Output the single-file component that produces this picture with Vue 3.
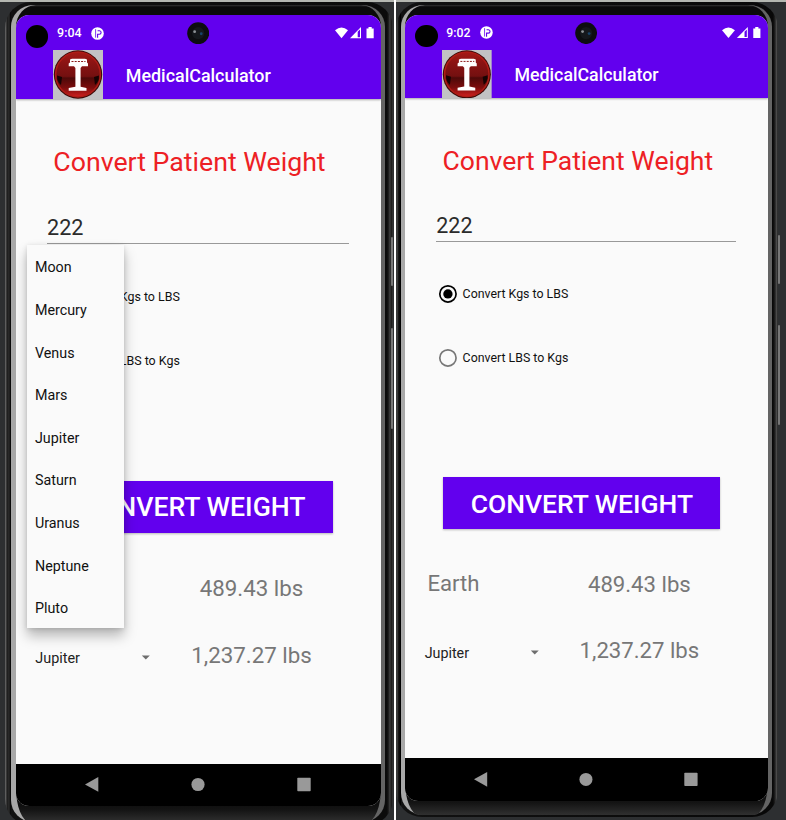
<script setup>
import { ref } from 'vue'

const planets = ['Moon', 'Mercury', 'Venus', 'Mars', 'Jupiter', 'Saturn', 'Uranus', 'Neptune', 'Pluto']
const phones = ref([
  { id: 'first', time: '9:04', menuOpen: true },
  { id: 'second', time: '9:02', menuOpen: false }
])
const modes = [
  { label: 'Convert Kgs to LBS', selected: true },
  { label: 'Convert LBS to Kgs', selected: false }
]
</script>

<template>
  <main class="board">
    <section v-for="phone in phones" :key="phone.id" class="pane" :class="phone.id">
      <div class="frame">
        <i class="key power"></i>
        <i class="key volume"></i>
        <div class="rim">
          <div class="glass">
            <div class="screen">
              <header class="top">
                <i class="dot"></i>
                <svg class="camera" viewBox="0 0 22 22">
                  <circle cx="11" cy="11" r="10.8" fill="#0d0d10" />
                  <circle cx="11" cy="11" r="6" fill="#15181c" />
                  <circle cx="7.5" cy="9.5" r="1.4" fill="#8d9296" />
                  <circle cx="14" cy="11.5" r="1.4" fill="#17446b" />
                </svg>
                <div class="status">
                  <span class="time">{{ phone.time }}</span>
                  <svg class="badge" viewBox="0 0 13 13">
                    <circle cx="6.5" cy="6.5" r="6.3" fill="#fff" />
                    <path d="M4.6 2.2V10.6" fill="none" stroke="#6200ee" stroke-width=".8" />
                    <path d="M6.6 10.8V7.2H8.4a1.6 1.6 0 0 0 0-3.4H6.6" fill="none" stroke="#6200ee" stroke-width="1.1" />
                  </svg>
                  <svg class="signals" viewBox="0 0 40 12">
                    <path d="M0 3.2Q6.5-2 13 3.2L6.5 11.2Z" fill="#fff" />
                    <path d="M15 11.2L26 0V11.2Z" fill="#fff" />
                    <path d="M22.7 4.8L25 2.5V10.2H22.7Z" fill="#6200ee" />
                    <path d="M31.5 1.5H33.5V0H36.7V1.5H38.7V11.2H31.5Z" fill="#fff" />
                  </svg>
                </div>
                <div class="appbar">
                  <svg class="logo" viewBox="0 0 50 49" preserveAspectRatio="none">
                    <defs>
                      <linearGradient :id="'ball-' + phone.id" x1="0" y1="0" x2="0" y2="1">
                        <stop offset="0" stop-color="#a51a16" />
                        <stop offset=".25" stop-color="#8a1313" />
                        <stop offset=".54" stop-color="#741010" />
                        <stop offset=".58" stop-color="#4e0909" />
                        <stop offset=".8" stop-color="#7d0d0d" />
                        <stop offset="1" stop-color="#d02020" />
                      </linearGradient>
                    </defs>
                    <rect width="50" height="49" fill="#c2c2c4" />
                    <circle cx="25" cy="24.5" r="24.2" fill="#3c0a08" />
                    <circle cx="25" cy="24.5" r="22.4" :fill="`url(#ball-${phone.id})`" stroke="#b01c17" stroke-width="1.5" />
                    <path d="M4 25.5Q4 32 8 35L9 27ZM46 25.5Q46 32 42 35L41 27Z" fill="#160303" />
                    <path d="M17 9.5L19 8.7H32L34 9.5V12.5L35 13.5V16.3H29L27.6 18V36.8L33.5 38V40.8H15.7V38L22.4 36.8V18L21 16.3H15.7V13.5L17 12.5Z" fill="#fff" />
                    <path d="M18.5 11.5H32.5" stroke="#8b1717" stroke-width="1" stroke-dasharray="2 1.2" />
                  </svg>
                  <h1>MedicalCalculator</h1>
                </div>
              </header>

              <div class="content">
                <h2>Convert Patient Weight</h2>
                <div class="field">222</div>
                <div v-for="mode in modes" :key="mode.label" class="radio">
                  <svg viewBox="0 0 20 20" :class="{ on: mode.selected }">
                    <circle cx="10" cy="10" r="8.2" fill="none" stroke="currentColor" stroke-width="1.7" />
                    <circle v-if="mode.selected" cx="10" cy="10" r="4.7" fill="currentColor" />
                  </svg>
                  <span>{{ mode.label }}</span>
                </div>
                <button type="button">CONVERT WEIGHT</button>
                <div class="result earth">
                  <span class="place">Earth</span>
                  <span class="amount">489.43 lbs</span>
                </div>
                <div class="result other">
                  <span class="choice">Jupiter</span>
                  <svg class="caret" viewBox="0 0 10 5"><path d="M.8.5H8.8L4.8 4.5Z" fill="#6d6d6d" /></svg>
                  <span class="amount">1,237.27 lbs</span>
                </div>
              </div>

              <nav>
                <svg viewBox="0 0 14 15"><path d="M13.3 0V14.8L0 7.4Z" fill="#999" /></svg>
                <svg viewBox="0 0 14 15"><circle cx="7" cy="7.5" r="6.6" fill="#999" /></svg>
                <svg viewBox="0 0 14 15"><rect x=".3" y=".8" width="13.4" height="13.4" rx=".8" fill="#999" /></svg>
              </nav>

              <ul v-if="phone.menuOpen" class="menu">
                <li v-for="planet in planets" :key="planet">{{ planet }}</li>
              </ul>
            </div>
          </div>
        </div>
      </div>
    </section>
  </main>
</template>

<style>
body { margin: 0; background: #fff; overflow: hidden; }
</style>

<style scoped>
* { box-sizing: border-box; }
.board { display: flex; gap: 2px; width: 786px; height: 820px; font-family: Roboto, sans-serif; background: #fff; }
.pane { --u: 1px; height: 820px; overflow: hidden; background: #2d2f31; border-top: 2px solid #b4b7b1; }
.first { width: 394px; padding-left: 5px; }
.second { --u: .9933px; width: 390px; }
.frame {
  position: relative; width: 387.5px; height: 823px; padding: 3px 8px 3px 6px; border-radius: 26px;
  background:
    linear-gradient(90deg, #666 0, #555 1px, #1c1c1c 2px, #2c2c2c 4px, #000 6px, transparent 6px),
    linear-gradient(270deg, #3a3a3a 0, #151515 2px, #484848 3px, #252525 4px, #0b0b0b 6px, #111 100%);
}
.second .frame {
  width: 382px; height: 815px; padding: 3px 6.5px 2px 4.5px;
  background:
    linear-gradient(90deg, #1c1c1c 0, #555 1px, #1c1c1c 2px, #000 4.5px, transparent 5px),
    linear-gradient(270deg, #222 0, #4a4a4a 1.5px, #222 3px, #080808 5px, #111 100%);
}
.rim {
  height: 100%; padding: 0 3.5px 0 4.5px; border-radius: 22px;
  background: linear-gradient(90deg, #a8a8a8 0 50%, #646464 50%);
}
.glass {
  height: 100%; padding-top: 10px; border-radius: 20px 20px 14px 14px / 22px 22px 34px 34px;
  background: linear-gradient(#333 0, #0a0a0a 2px, #0c0c0c 97.5%, #141414 98.5%, #303030 100%);
}
.key { position: absolute; right: 0; width: 2px; border-radius: 1px; background: #777; }
.power { top: 235px; height: 49px; }
.volume { top: 326px; height: 101px; }
.second .power { top: 233px; height: 49px; right: -2px; }
.second .volume { top: 323px; height: 100px; right: -2px; }
.screen {
  position: relative; display: flex; flex-direction: column; width: 100%; height: calc(791 * var(--u));
  overflow: hidden; border-radius: 13px; background: #fafafa;
}
.top {
  position: relative; flex: none; height: calc(84 * var(--u)); background: #6200ee; color: #fff;
  box-shadow: 0 1px 2px #0005;
}
.dot, .camera { position: absolute; width: calc(22.4 * var(--u)); height: calc(22.4 * var(--u)); }
.dot { left: calc(10.5 * var(--u)); top: calc(10.3 * var(--u)); border-radius: 50%; background: #000; }
.camera { left: calc(171.3 * var(--u)); top: calc(7 * var(--u)); }
.status {
  display: flex; align-items: center; height: calc(35 * var(--u)); padding: 1px calc(6.2 * var(--u)) 0 calc(41.6 * var(--u));
}
.time { width: calc(34.3 * var(--u)); font-size: calc(12.4 * var(--u)); font-weight: 500; line-height: 1; }
.badge { width: calc(13 * var(--u)); height: calc(13 * var(--u)); }
.signals { width: calc(40 * var(--u)); height: calc(12 * var(--u)); margin-left: auto; }
.appbar { display: flex; height: calc(49 * var(--u)); padding-left: calc(37.5 * var(--u)); }
.logo { width: calc(50 * var(--u)); height: 100%; }
h1 {
  margin: 0 0 0 calc(22.8 * var(--u)); font-size: calc(17.9 * var(--u)); font-weight: 500;
  line-height: calc(51 * var(--u));
}
.content { display: flex; flex: 1; flex-direction: column; align-items: flex-start; min-height: 0; }
h2 {
  margin: calc(46.4 * var(--u)) 0 0 calc(37.8 * var(--u)); font-size: calc(26.7 * var(--u)); font-weight: 400;
  line-height: calc(34 * var(--u)); color: #ed2024; white-space: nowrap;
}
.second h2 { margin-top: 45.4px; margin-bottom: .7px; }
.field {
  width: calc(302 * var(--u)); height: calc(34 * var(--u)); margin: calc(30.6 * var(--u)) 0 0 calc(31 * var(--u));
  padding-left: .5px; border-bottom: 1px solid #999; font-size: calc(21.6 * var(--u)); line-height: calc(35 * var(--u)); color: #2b2b2b;
}
.first .field { margin-bottom: .8px; }
.second .field { margin-bottom: .3px; }
.radio {
  display: flex; align-items: center; gap: calc(4.3 * var(--u)); height: calc(24 * var(--u));
  margin: calc(40 * var(--u)) 0 0 calc(33.7 * var(--u)); font-size: calc(12.45 * var(--u)); color: #111;
}
.radio svg { width: calc(20 * var(--u)); height: calc(20 * var(--u)); color: #777; }
.radio svg.on { color: #000; }
button {
  width: calc(279 * var(--u)); height: calc(51.5 * var(--u)); margin: calc(108.3 * var(--u)) 0 0 calc(38.6 * var(--u));
  padding: 2px 0 0; border: 0; background: #6200ee; color: #fff; font-family: inherit; font-size: calc(26.65 * var(--u));
  font-weight: 500; line-height: calc(49.5 * var(--u)); white-space: nowrap; box-shadow: 0 1px 2px #0004;
}
.result {
  display: flex; align-items: center; width: 100%; height: calc(30 * var(--u));
  font-size: calc(22.3 * var(--u)); color: #777; white-space: nowrap;
}
.earth { margin-top: calc(40.5 * var(--u)); padding-left: calc(22.6 * var(--u)); }
.place { width: calc(161.6 * var(--u)); padding-bottom: 1px; }
.other { margin-top: calc(37 * var(--u)); padding-left: calc(19.8 * var(--u)); }
.choice { width: calc(106 * var(--u)); padding-top: calc(6 * var(--u)); font-size: calc(14.4 * var(--u)); color: #222; }
.caret { width: calc(10 * var(--u)); height: calc(5 * var(--u)); margin: calc(5 * var(--u)) calc(40 * var(--u)) 0 0; }
nav {
  display: flex; flex: none; justify-content: space-between; align-items: center; height: calc(42.5 * var(--u));
  padding: 0 calc(70.5 * var(--u)) 0 calc(69.5 * var(--u)); background: #000;
}
nav svg { width: calc(14 * var(--u)); height: calc(15 * var(--u)); }
.menu {
  position: absolute; left: 11.7px; top: 230px; width: 97px; margin: 0; padding: 0; list-style: none;
  background: #fafafa; box-shadow: 0 8px 12px #0004, 0 1px 5px #0002;
}
.menu li { height: 42.6px; padding: 1.4px 0 0 7.8px; font-size: 14.3px; line-height: 42.6px; color: #111; }
</style>
